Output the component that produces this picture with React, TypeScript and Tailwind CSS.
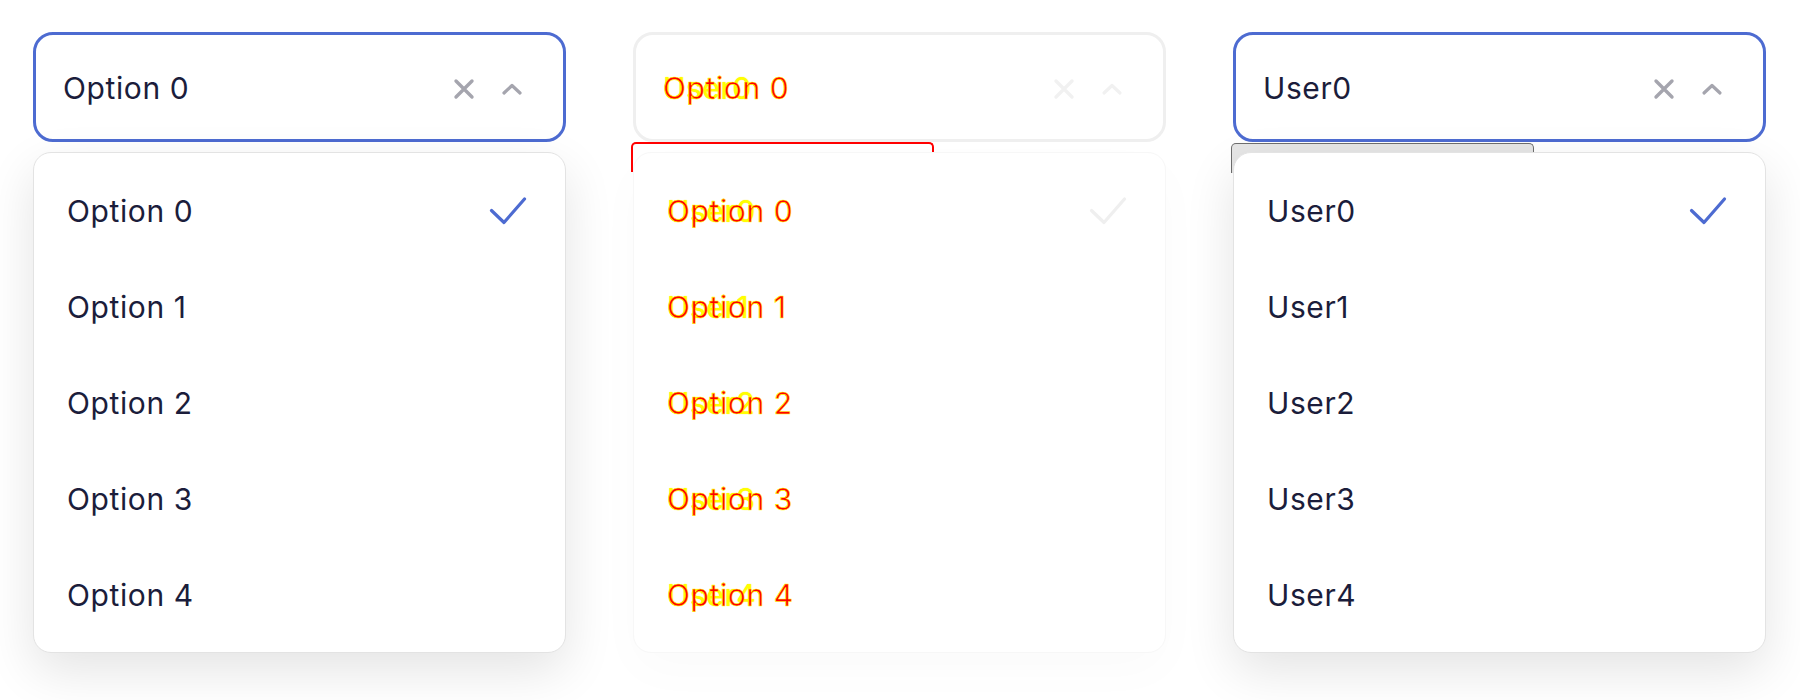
import React from "react";

const options = ["Option 0", "Option 1", "Option 2", "Option 3", "Option 4"];
const users = ["User0", "User1", "User2", "User3", "User4"];

function XIcon({ className }: { className?: string }) {
  return (
    <svg width="24" height="24" viewBox="0 0 24 24" className={className} fill="none">
      <path d="M4 4 L20 20 M20 4 L4 20" stroke="currentColor" strokeWidth="3.4" strokeLinecap="round" />
    </svg>
  );
}

function ChevronUp({ className }: { className?: string }) {
  return (
    <svg width="22" height="14" viewBox="0 0 22 14" className={className} fill="none">
      <path d="M3 11 L11 3.5 L19 11" stroke="currentColor" strokeWidth="3.2" strokeLinecap="round" strokeLinejoin="round" />
    </svg>
  );
}

function CheckIcon({ className }: { className?: string }) {
  return (
    <svg width="38" height="30" viewBox="0 0 38 30" className={className} fill="none">
      <path d="M2.5 14.5 L15 26.5 L35.5 3" stroke="currentColor" strokeWidth="3.2" strokeLinecap="round" strokeLinejoin="round" />
    </svg>
  );
}

// a normal open select with its list
function OpenSelect({ items }: { items: string[] }) {
  return (
    <div className="relative w-[533px]">
      <div className="flex h-[110px] items-center rounded-[20px] border-[3px] border-[#4d6bd1] bg-white pl-[27px] pr-[40px] pt-[3px]">
        <span className="flex-1 text-[30px] tracking-[0.02em] text-[#1b1d3b]">{items[0]}</span>
        <XIcon className="text-[#a5a5ae]" />
        <ChevronUp className="ml-[25px] text-[#a5a5ae]" />
      </div>
      <div className="relative z-10 mt-[10px] rounded-[18px] border border-[#e3e3e3] bg-white pb-[9px] pt-[10px] shadow-[0_18px_50px_rgba(0,0,0,0.11)]">
        {items.map((it, i) => (
          <div key={it} className="flex h-[96px] items-center pl-[33px] pr-[38px]">
            <span className="flex-1 text-[30px] tracking-[0.02em] text-[#1b1d3b]">{it}</span>
            {i === 0 && <CheckIcon className="text-[#4d6bd1]" />}
          </div>
        ))}
      </div>
    </div>
  );
}

// the faint middle one, with two labels on top of each other
function DiffText({ a, b }: { a: string; b: string }) {
  return (
    <span className="relative flex-1 text-[30px] tracking-[0.02em]">
      <span className="absolute left-0 top-0 text-[#ffff00] [text-shadow:0_0_1px_#ffe600]">{b}</span>
      <span className="relative text-[#ff0000] [-webkit-text-stroke:0.6px_#ffff00]">{a}</span>
    </span>
  );
}

function FaintSelect() {
  return (
    <div className="relative w-[533px]">
      <div className="flex h-[110px] items-center rounded-[20px] border-[3px] border-[#efefef] bg-white pl-[27px] pr-[40px] pt-[3px]">
        <DiffText a={options[0]} b={users[0]} />
        <XIcon className="text-[#f1f1f1]" />
        <ChevronUp className="ml-[25px] text-[#f1f1f1]" />
      </div>
      <div className="absolute left-[-2px] top-[110px] h-[30px] w-[303px] rounded-t-[5px] border-2 border-b-0 border-[#ff0000]" />
      <div className="relative z-10 mt-[10px] rounded-[18px] border border-[#f7f7f7] bg-white pb-[9px] pt-[10px] shadow-[0_18px_50px_rgba(0,0,0,0.02)]">
        {options.map((it, i) => (
          <div key={it} className="flex h-[96px] items-center pl-[33px] pr-[38px]">
            <DiffText a={it} b={users[i]} />
            {i === 0 && <CheckIcon className="text-[#efefef]" />}
          </div>
        ))}
      </div>
    </div>
  );
}

export default function App() {
  return (
    <div className="min-h-[700px] bg-white font-['Inter',sans-serif]">
      <div className="flex gap-[67px] pl-[33px] pt-[32px]">
        <OpenSelect items={options} />
        <FaintSelect />
        <div className="relative">
          <div className="absolute left-[-2px] top-[111px] h-[30px] w-[303px] rounded-t-[5px] border-[1.5px] border-b-0 border-[#6e6e6e] bg-[#e6e6e6]" />
          <OpenSelect items={users} />
        </div>
      </div>
    </div>
  );
}
